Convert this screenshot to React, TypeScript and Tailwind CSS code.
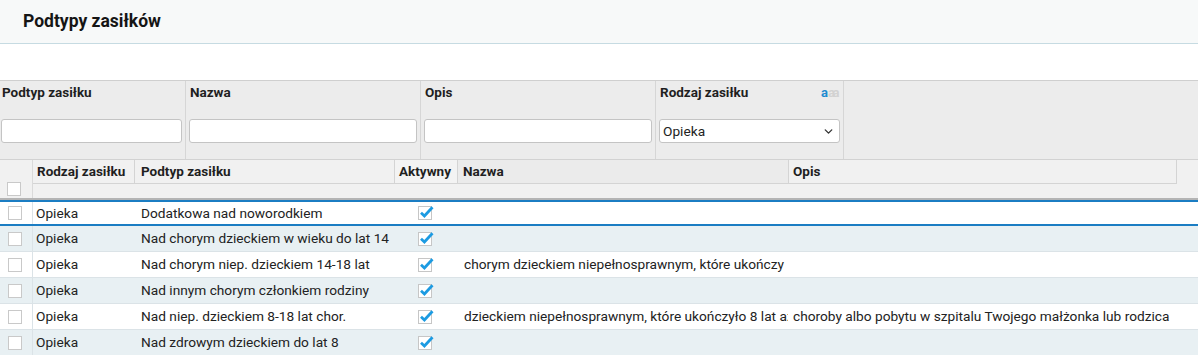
import React from 'react';
import { ChevronDown } from 'lucide-react';

interface Row {
  rodzaj: string;
  podtyp: string;
  nazwa: string;
  opis: string;
}

const rows: Row[] = [
  { rodzaj: 'Opieka', podtyp: 'Dodatkowa nad noworodkiem', nazwa: '', opis: '' },
  { rodzaj: 'Opieka', podtyp: 'Nad chorym dzieckiem w wieku do lat 14', nazwa: '', opis: '' },
  {
    rodzaj: 'Opieka',
    podtyp: 'Nad chorym niep. dzieckiem 14-18 lat',
    nazwa: 'chorym dzieckiem niepełnosprawnym, które ukończy',
    opis: '',
  },
  { rodzaj: 'Opieka', podtyp: 'Nad innym chorym członkiem rodziny', nazwa: '', opis: '' },
  {
    rodzaj: 'Opieka',
    podtyp: 'Nad niep. dzieckiem 8-18 lat chor.',
    nazwa: 'dzieckiem niepełnosprawnym, które ukończyło 8 lat aż',
    opis: 'choroby albo pobytu w szpitalu Twojego małżonka lub rodzica',
  },
  { rodzaj: 'Opieka', podtyp: 'Nad zdrowym dzieckiem do lat 8', nazwa: '', opis: '' },
];

const Box = () => (
  <div className="w-[14px] h-[14px] bg-white border border-[#c9c9c9]" />
);

const Checked = () => (
  <svg width="17" height="16" viewBox="0 0 17 16">
    <rect x="0.5" y="1.5" width="13" height="13" fill="#fff" stroke="#c6c6c6" />
    <path d="M3 7.8 L6.4 11 L14.5 2.2" fill="none" stroke="#1c9be2" strokeWidth="2.8" strokeLinecap="butt" />
  </svg>
);

const FilterCol: React.FC<{ label: string; w: string; pl?: string; children: React.ReactNode; extra?: React.ReactNode }> = ({
  label,
  w,
  pl = 'pl-[3px]',
  children,
  extra,
}) => (
  <div className={`${w} h-full border-r border-[#d6d6d6] ${pl} pr-[3px] pt-[3px] flex flex-col`}>
    <div className="h-[16px] leading-[16px] text-[13.5px] font-bold text-[#1f1f1f] flex items-center justify-between pl-[1px]">
      <span>{label}</span>
      {extra}
    </div>
    <div className="mt-[19px]">{children}</div>
  </div>
);

const TextInput = () => (
  <div className="h-[24px] bg-white border border-[#c4c4c4] rounded-[3px]" />
);

export default function App() {
  return (
    <div className="w-[1198px] h-[355px] overflow-hidden bg-white font-['Roboto',sans-serif] text-[#222]">
      <div className="h-[44px] bg-[#f7f9f9] border-b border-[#c6dbe2] flex items-center pl-[23px]">
        <h1 className="text-[17.5px] font-bold text-[#151515]">Podtypy zasiłków</h1>
      </div>

      <div className="h-[36px]" />

      <div className="h-[79px] border-t border-[#cfcfcf] bg-[#ececec] flex">
        <FilterCol label="Podtyp zasiłku" w="w-[186px]" pl="pl-[1px]">
          <TextInput />
        </FilterCol>
        <FilterCol label="Nazwa" w="w-[235px]">
          <TextInput />
        </FilterCol>
        <FilterCol label="Opis" w="w-[235px]">
          <TextInput />
        </FilterCol>
        <FilterCol
          label="Rodzaj zasiłku"
          w="w-[188px]"
          extra={
            <span className="text-[13px] leading-none mr-[3px] flex">
              <span className="text-[#1e8bd0] font-bold">a</span>
              <span className="text-[#d2d2d2] font-bold tracking-[-2.5px]">aa</span>
            </span>
          }
        >
          <div className="h-[24px] bg-white border border-[#c4c4c4] rounded-[3px] flex items-center justify-between pl-[3px] pr-[4px] text-[13.7px] text-[#222]">
            <span>Opieka</span>
            <ChevronDown className="w-[13px] h-[13px] text-[#333]" strokeWidth={2.5} />
          </div>
        </FilterCol>
        <div className="flex-1" />
      </div>

      <div className="h-[41px] border-t border-[#d2d2d2] border-b-2 border-b-[#b4b4b4] bg-[#f1f1f1] flex">
        <div className="w-[32px] flex items-end pl-[7px] pb-[2px]">
          <Box />
        </div>
        <div className="flex-1 border-l border-[#dadada] flex flex-col">
          <div className="h-[24px] flex text-[13.5px] font-bold text-[#1f1f1f]">
            <div className="w-[101px] pl-[4px] flex items-center border-b border-[#d4d4d4]">Rodzaj zasiłku</div>
            <div className="w-[260px] pl-[6px] flex items-center border-l border-b border-[#d4d4d4]">Podtyp zasiłku</div>
            <div className="w-[63px] pl-[4px] flex items-center border-l border-b border-[#d4d4d4] bg-[#f3f3f3]">Aktywny</div>
            <div className="w-[331px] pl-[5px] flex items-center border-l border-b border-[#d4d4d4] bg-[#ebebeb]">Nazwa</div>
            <div className="w-[389px] pl-[4px] flex items-center border-l border-r border-b border-[#d4d4d4]">Opis</div>
          </div>
        </div>
      </div>

      {rows.map((r, i) => {
        const first = i === 0;
        const bg = first ? 'bg-white' : i % 2 === 1 ? 'bg-[#e8f0f3]' : 'bg-white';
        const border = first ? 'border-y-2 border-[#1b7dc3]' : 'border-b border-[#dbe3e7]';
        return (
          <div key={i} className={`h-[26px] flex text-[13.7px] text-[#222] ${bg} ${border}`}>
            <div className="w-[32px] flex items-center pl-[8px]">
              <Box />
            </div>
            <div className="flex-1 flex border-l border-[#dbe3e7]">
              <div className="w-[101px] pl-[3px] flex items-center">{r.rodzaj}</div>
              <div className="w-[260px] pl-[7px] flex items-center whitespace-nowrap overflow-hidden">{r.podtyp}</div>
              <div className="w-[63px] flex items-center justify-center pl-[2px]">
                <Checked />
              </div>
              <div className="w-[331px] pl-[7px] flex items-center whitespace-nowrap overflow-hidden">
                {r.nazwa}
              </div>
              <div className="w-[389px] pl-[5px] flex items-center whitespace-nowrap overflow-hidden">
                {r.opis}
              </div>
            </div>
          </div>
        );
      })}
    </div>
  );
}
